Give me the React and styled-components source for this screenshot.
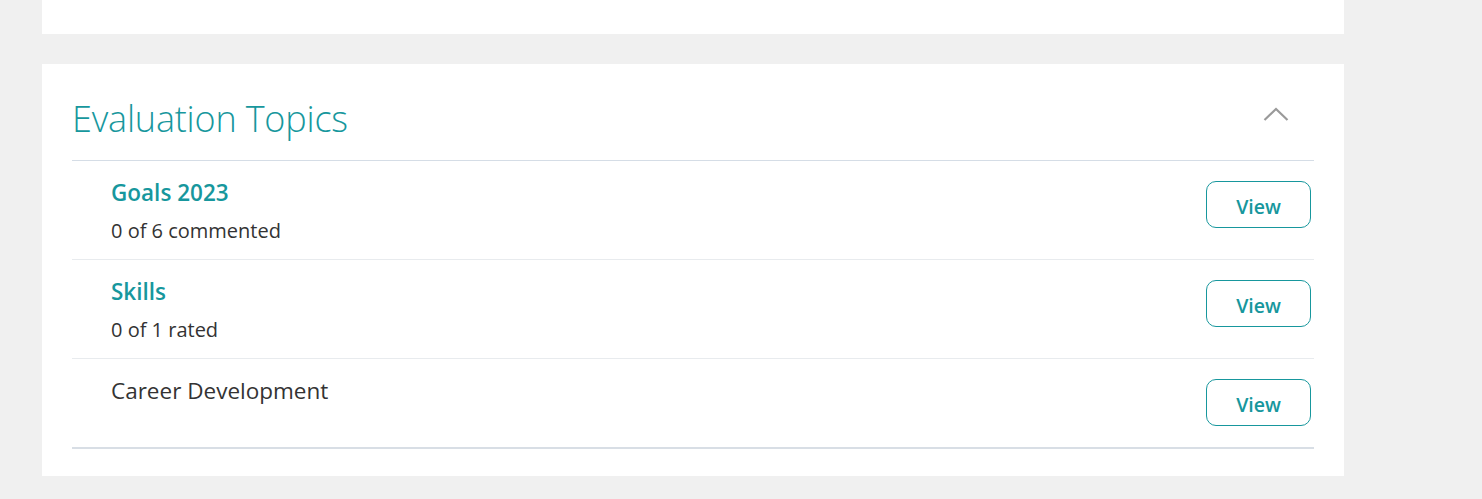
import React from 'react';
import styled, { createGlobalStyle } from 'styled-components';

const GlobalStyle = createGlobalStyle`
  body {
    margin: 0;
    background: #f0f0f0;
    font-family: "Open Sans", "Noto Sans", sans-serif;
  }
`

const Page = styled.div`
  padding: 0 138px 23px 42px;
  display: flex;
  flex-direction: column;
  gap: 30px;
`

const TopCard = styled.div`
  background: #fff;
  height: 34px;
`

const Card = styled.section`
  background: #fff;
  padding: 0 30px 27px;
`

const Header = styled.div`
  display: flex;
  align-items: center;
  justify-content: space-between;
  height: 96px;
  border-bottom: 1px solid #d5dde6;
`

const Heading = styled.h2`
  margin: 12px 0 0;
  font-weight: 300;
  font-size: 36px;
  color: #17979d;
  letter-spacing: -0.2px;
`

const Toggle = styled.button`
  border: none;
  background: none;
  padding: 0;
  margin: 4px 24px 0 0;
  width: 28px;
  height: 20px;
  display: flex;
  align-items: center;
  justify-content: center;
  cursor: pointer;
`

const List = styled.div`
  border-bottom: 2px solid #d8dee5;
`

const Row = styled.div`
  display: flex;
  justify-content: space-between;
  align-items: flex-start;
  padding: 12px 3px 10px 39px;
  & + & {
    border-top: 1px solid #e8ebee;
  }
`

const Info = styled.div`
  display: flex;
  flex-direction: column;
`

const TopicName = styled.div`
  line-height: 40px;
  font-size: 22.5px;
  font-weight: ${p => (p.$active ? 600 : 400)};
  color: ${p => (p.$active ? '#17979d' : '#333')};
`

const Progress = styled.div`
  line-height: 36px;
  font-size: 20px;
  color: #333;
`

const ViewButton = styled.button`
  margin: 8px 0 11px;
  padding: 3px 0 0;
  width: 105px;
  height: 47px;
  border: 1px solid #17979d;
  border-radius: 10px;
  background: #fff;
  color: #17979d;
  font-family: inherit;
  font-size: 19.5px;
  font-weight: 600;
  cursor: pointer;
`

const topics = [
  { name: 'Goals 2023', progress: '0 of 6 commented', active: true },
  { name: 'Skills', progress: '0 of 1 rated', active: true },
  { name: 'Career Development' },
]

export default function App() {
  return (
    <>
      <GlobalStyle />
      <Page>
        <TopCard />
        <Card>
          <Header>
            <Heading>Evaluation Topics</Heading>
            <Toggle aria-label="Collapse">
              <svg width="26" height="14" viewBox="0 0 26 14" fill="none">
                <path d="M1.5 13 L13 2 L24.5 13" stroke="#9a9a9a" strokeWidth="2.2" />
              </svg>
            </Toggle>
          </Header>
          <List>
            {topics.map(t => (
              <Row key={t.name}>
                <Info>
                  <TopicName $active={t.active}>{t.name}</TopicName>
                  {t.progress && <Progress>{t.progress}</Progress>}
                </Info>
                <ViewButton>View</ViewButton>
              </Row>
            ))}
          </List>
        </Card>
      </Page>
    </>
  )
}
